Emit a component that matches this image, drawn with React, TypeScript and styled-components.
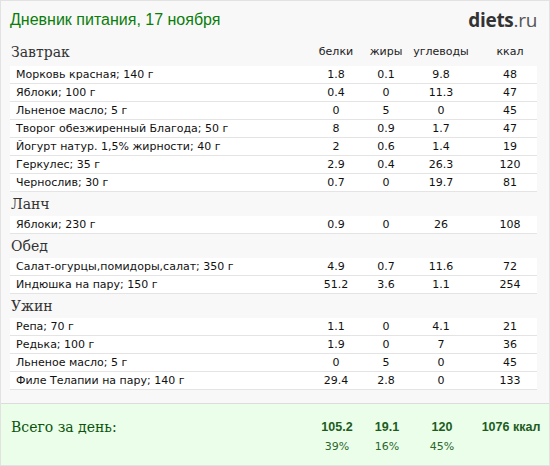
import React from "react";
import styled, { createGlobalStyle } from "styled-components";

const Global = createGlobalStyle`
  html, body { margin: 0; padding: 0; background: #fff; }
`;

type Item = { name: string; p: string; f: string; c: string; k: string };
type Meal = { title: string; items: Item[] };

const meals: Meal[] = [
  {
    title: "Завтрак",
    items: [
      { name: "Морковь красная; 140 г", p: "1.8", f: "0.1", c: "9.8", k: "48" },
      { name: "Яблоки; 100 г", p: "0.4", f: "0", c: "11.3", k: "47" },
      { name: "Льненое масло; 5 г", p: "0", f: "5", c: "0", k: "45" },
      { name: "Творог обезжиренный Благода; 50 г", p: "8", f: "0.9", c: "1.7", k: "47" },
      { name: "Йогурт натур. 1,5% жирности; 40 г", p: "2", f: "0.6", c: "1.4", k: "19" },
      { name: "Геркулес; 35 г", p: "2.9", f: "0.4", c: "26.3", k: "120" },
      { name: "Чернослив; 30 г", p: "0.7", f: "0", c: "19.7", k: "81" },
    ],
  },
  {
    title: "Ланч",
    items: [{ name: "Яблоки; 230 г", p: "0.9", f: "0", c: "26", k: "108" }],
  },
  {
    title: "Обед",
    items: [
      { name: "Салат-огурцы,помидоры,салат; 350 г", p: "4.9", f: "0.7", c: "11.6", k: "72" },
      { name: "Индюшка на пару; 150 г", p: "51.2", f: "3.6", c: "1.1", k: "254" },
    ],
  },
  {
    title: "Ужин",
    items: [
      { name: "Репа; 70 г", p: "1.1", f: "0", c: "4.1", k: "21" },
      { name: "Редька; 100 г", p: "1.9", f: "0", c: "7", k: "36" },
      { name: "Льненое масло; 5 г", p: "0", f: "5", c: "0", k: "45" },
      { name: "Филе Телапии на пару; 140 г", p: "29.4", f: "2.8", c: "0", k: "133" },
    ],
  },
];

const Frame = styled.div`
  width: 550px;
  height: 466px;
  box-sizing: border-box;
  border: 1px solid #e2e2e2;
  background: #f8f8f8;
  display: flex;
  flex-direction: column;
  overflow: hidden;
`;

const Header = styled.div`
  display: flex;
  justify-content: space-between;
  align-items: center;
  height: 34px;
  padding: 2px 12px 0 9px;
`;

const Title = styled.h1`
  margin: 0;
  font-family: "Liberation Sans", Arial, sans-serif;
  font-weight: normal;
  font-size: 16px;
  color: #0a7d0a;
`;

const Logo = styled.div`
  font-family: "Open Sans", "Noto Sans", sans-serif;
  font-size: 19px;
  letter-spacing: -0.3px;
  color: #333;
  b { font-weight: 700; }
  span { font-weight: 400; color: #555; }
`;

const Body = styled.div`
  flex: 1;
  padding: 0 12px 0 9px;
`;

const cols = `1fr 52px 48px 62px 65px`;

const SectionHead = styled.div<{ $first?: boolean }>`
  display: grid;
  grid-template-columns: ${cols};
  align-items: center;
  height: ${(p) => (p.$first ? "29px" : "24px")};
`;

const MealTitle = styled.div`
  font-family: "DejaVu Serif", Georgia, serif;
  font-size: 14px;
  color: #333;
  padding-left: 1px;
`;

const ColLabel = styled.div<{ $last?: boolean }>`
  font-family: "DejaVu Sans", Verdana, sans-serif;
  font-size: 11px;
  color: #222;
  text-align: center;
  padding-left: ${(p) => (p.$last ? "11px" : "0")};
`;

const Row = styled.div`
  display: grid;
  grid-template-columns: ${cols};
  align-items: center;
  height: 17px;
  background: #fff;
  border-bottom: 1px solid #e4e4e4;
  font-family: "DejaVu Sans", Verdana, sans-serif;
  font-size: 11px;
  color: #111;
`;

const Name = styled.div`
  padding-left: 6px;
  white-space: nowrap;
`;

const Num = styled.div<{ $last?: boolean }>`
  text-align: center;
  padding-left: ${(p) => (p.$last ? "11px" : "0")};
`;

const Footer = styled.div`
  background: #eafeea;
  border-top: 1px solid #dcdcdc;
  display: grid;
  grid-template-columns: 1fr 52px 48px 62px 76px;
  grid-template-rows: 20px 18px;
  padding: 13px 0 0 9px;
  box-sizing: border-box;
  height: 62px;
`;

const TotalLabel = styled.div`
  font-family: "DejaVu Serif", Georgia, serif;
  font-size: 14px;
  color: #0b540b;
  padding-left: 1px;
  align-self: center;
`;

const TotalNum = styled.div`
  font-family: "Liberation Sans", Arial, sans-serif;
  font-weight: bold;
  font-size: 12.5px;
  color: #1d5c1d;
  text-align: center;
  align-self: center;
  white-space: nowrap;
`;

const Pct = styled.div`
  font-family: "DejaVu Sans", Verdana, sans-serif;
  font-size: 11px;
  color: #2c662c;
  text-align: center;
  align-self: center;
`;

export default function App() {
  return (
    <>
      <Global />
      <Frame>
        <Header>
          <Title>Дневник питания, 17 ноября</Title>
          <Logo>
            <b>diets</b>
            <span>.ru</span>
          </Logo>
        </Header>
        <Body>
          {meals.map((m, i) => (
            <React.Fragment key={m.title}>
              <SectionHead $first={i === 0}>
                <MealTitle>{m.title}</MealTitle>
                {i === 0 ? (
                  <>
                    <ColLabel>белки</ColLabel>
                    <ColLabel>жиры</ColLabel>
                    <ColLabel>углеводы</ColLabel>
                    <ColLabel $last>ккал</ColLabel>
                  </>
                ) : null}
              </SectionHead>
              {m.items.map((it, j) => (
                <Row key={j}>
                  <Name>{it.name}</Name>
                  <Num>{it.p}</Num>
                  <Num>{it.f}</Num>
                  <Num>{it.c}</Num>
                  <Num $last>{it.k}</Num>
                </Row>
              ))}
            </React.Fragment>
          ))}
        </Body>
        <Footer>
          <TotalLabel>Всего за день:</TotalLabel>
          <TotalNum>105.2</TotalNum>
          <TotalNum>19.1</TotalNum>
          <TotalNum>120</TotalNum>
          <TotalNum>1076 ккал</TotalNum>
          <div />
          <Pct>39%</Pct>
          <Pct>16%</Pct>
          <Pct>45%</Pct>
          <div />
        </Footer>
      </Frame>
    </>
  );
}
